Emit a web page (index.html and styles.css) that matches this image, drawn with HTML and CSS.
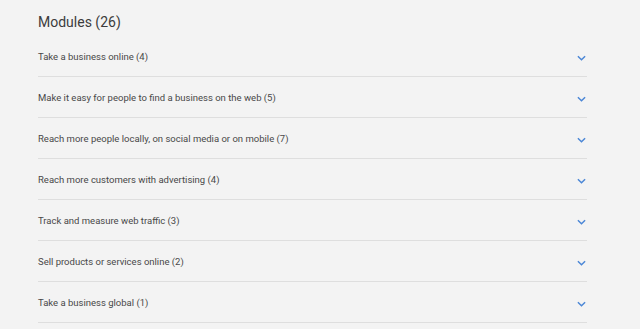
FILE: index.html
```html
<!DOCTYPE html>
<html lang="en">
  <head>
    <meta charset="UTF-8" />
    <title>Modules</title>
    <meta name="viewport" content="width=device-width, initial-scale=1.0" />
    <link rel="stylesheet" href="styles.css">
  </head>
  <body>
    <div class="container">
      <h2>Modules (26)</h2>
      <ul class="module-list">
        <li class="module">
          <span>Take a business online (4)</span>
          <svg class="chevron" viewBox="0 0 10 6"><path d="M1 1l4 4 4-4" /></svg>
        </li>
        <li class="module">
          <span>Make it easy for people to find a business on the web (5)</span>
          <svg class="chevron" viewBox="0 0 10 6"><path d="M1 1l4 4 4-4" /></svg>
        </li>
        <li class="module">
          <span>Reach more people locally, on social media or on mobile (7)</span>
          <svg class="chevron" viewBox="0 0 10 6"><path d="M1 1l4 4 4-4" /></svg>
        </li>
        <li class="module">
          <span>Reach more customers with advertising (4)</span>
          <svg class="chevron" viewBox="0 0 10 6"><path d="M1 1l4 4 4-4" /></svg>
        </li>
        <li class="module">
          <span>Track and measure web traffic (3)</span>
          <svg class="chevron" viewBox="0 0 10 6"><path d="M1 1l4 4 4-4" /></svg>
        </li>
        <li class="module">
          <span>Sell products or services online (2)</span>
          <svg class="chevron" viewBox="0 0 10 6"><path d="M1 1l4 4 4-4" /></svg>
        </li>
        <li class="module">
          <span>Take a business global (1)</span>
          <svg class="chevron" viewBox="0 0 10 6"><path d="M1 1l4 4 4-4" /></svg>
        </li>
      </ul>
    </div>
  </body>
</html>
```

FILE: styles.css
```css
body {
  margin: 0;
  font-family: Roboto, 'Noto Sans', sans-serif;
  background: #f3f3f3;
  color: #484848;
}

.container {
  width: 549px;
  padding: 12px 0 0 38px;
}

h2 {
  margin: 0;
  font-size: 14px;
  font-weight: 400;
  color: #3c3c3c;
  line-height: 20px;
  height: 24px;
}

.module-list {
  list-style: none;
  margin: 0;
  padding: 0;
}

.module {
  display: flex;
  align-items: center;
  justify-content: space-between;
  height: 40px;
  border-bottom: 1px solid #dedede;
  font-size: 9.5px;
}

.chevron {
  width: 9px;
  height: 6px;
  margin-right: 1px;
  margin-top: 4px;
  fill: none;
  stroke: #4a86d6;
  stroke-width: 1.6;
}
```
